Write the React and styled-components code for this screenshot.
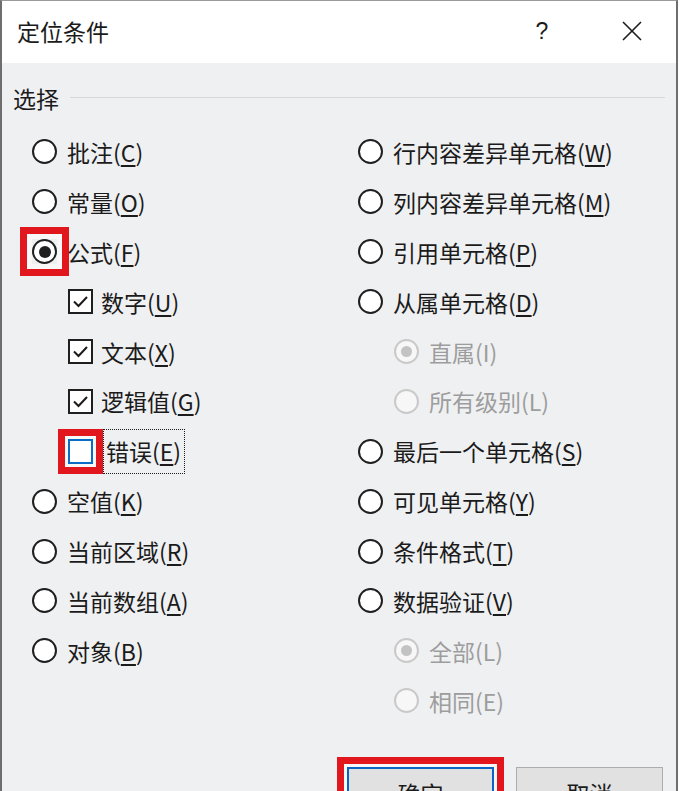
import React from "react";
import styled, { createGlobalStyle, css } from "styled-components";

const leftOptions = [
  { type: "radio", label: "批注", hotkey: "C" },
  { type: "radio", label: "常量", hotkey: "O" },
  { type: "radio", label: "公式", hotkey: "F", checked: true, highlight: true },
  { type: "check", label: "数字", hotkey: "U", checked: true, sub: true },
  { type: "check", label: "文本", hotkey: "X", checked: true, sub: true },
  { type: "check", label: "逻辑值", hotkey: "G", checked: true, sub: true },
  { type: "check", label: "错误", hotkey: "E", sub: true, highlight: true, focus: true },
  { type: "radio", label: "空值", hotkey: "K" },
  { type: "radio", label: "当前区域", hotkey: "R" },
  { type: "radio", label: "当前数组", hotkey: "A" },
  { type: "radio", label: "对象", hotkey: "B" },
];

const rightOptions = [
  { type: "radio", label: "行内容差异单元格", hotkey: "W" },
  { type: "radio", label: "列内容差异单元格", hotkey: "M" },
  { type: "radio", label: "引用单元格", hotkey: "P" },
  { type: "radio", label: "从属单元格", hotkey: "D" },
  { type: "radio", label: "直属", hotkey: "I", sub: true, disabled: true, checked: true },
  { type: "radio", label: "所有级别", hotkey: "L", sub: true, disabled: true },
  { type: "radio", label: "最后一个单元格", hotkey: "S" },
  { type: "radio", label: "可见单元格", hotkey: "Y" },
  { type: "radio", label: "条件格式", hotkey: "T" },
  { type: "radio", label: "数据验证", hotkey: "V" },
  { type: "radio", label: "全部", hotkey: "L", sub: true, disabled: true, checked: true },
  { type: "radio", label: "相同", hotkey: "E", sub: true, disabled: true },
];

function Option({ item }) {
  const { type, label, hotkey, checked, sub, disabled, highlight, focus } = item;
  return (
    <Row $sub={sub} $disabled={disabled}>
      {type === "radio" ? (
        <RadioFrame $highlight={highlight}>
          <Radio $disabled={disabled}>{checked && <Dot $disabled={disabled} />}</Radio>
        </RadioFrame>
      ) : (
        <CheckBox $highlight={highlight} $focus={focus}>
          {checked && (
            <svg width="21" height="21" viewBox="0 0 21 21">
              <path d="M4 10.5 L8.5 15 L17 6" fill="none" stroke="#1b1b1b" strokeWidth="2" />
            </svg>
          )}
        </CheckBox>
      )}
      <Label $focus={focus}>
        {label}(
        {disabled ? hotkey : <u>{hotkey}</u>})
      </Label>
    </Row>
  );
}

export default function App() {
  return (
    <>
      <GlobalStyle />
      <Window>
        <TitleBar>
          <Title>定位条件</Title>
          <HelpButton>?</HelpButton>
          <CloseButton>
            <svg width="20" height="20" viewBox="0 0 20 20">
              <path d="M1 1 L19 19 M19 1 L1 19" stroke="#1b1b1b" strokeWidth="1.6" />
            </svg>
          </CloseButton>
        </TitleBar>
        <Body>
          <GroupHeader>
            <span>选择</span>
            <Rule />
          </GroupHeader>
          <Columns>
            <Column>
              {leftOptions.map((item) => (
                <Option key={item.label} item={item} />
              ))}
            </Column>
            <Column>
              {rightOptions.map((item) => (
                <Option key={item.label} item={item} />
              ))}
            </Column>
          </Columns>
          <Buttons>
            <Button $primary>确定</Button>
            <Button>取消</Button>
          </Buttons>
        </Body>
      </Window>
    </>
  );
}

const GlobalStyle = createGlobalStyle`
  html, body {
    margin: 0;
    padding: 0;
    overflow: hidden;
    background: #ffffff;
  }
  body {
    font-family: "Noto Sans CJK SC", "Noto Sans", sans-serif;
    color: #1b1b1b;
  }
`;

const redFrame = (gap) => css`
  box-shadow: 0 0 0 ${gap}px #f8f8f8, 0 0 0 ${gap + 7}px #e2161d;
`;

const Window = styled.div`
  width: 678px;
  height: 900px;
  box-sizing: border-box;
  border-left: 2px solid #6e6e6e;
  border-right: 2px solid #6e6e6e;
  border-top: 1px solid #9a9a9a;
  display: flex;
  flex-direction: column;
  background: #eff0f2;
`;

const TitleBar = styled.div`
  height: 62px;
  flex-shrink: 0;
  display: flex;
  align-items: center;
  background: #ffffff;
  padding: 0 21px 0 15px;
`;

const Title = styled.div`
  flex: 1;
  font-size: 23px;
  line-height: 30px;
  padding-bottom: 2px;
`;

const HelpButton = styled.div`
  width: 46px;
  text-align: center;
  font-size: 23px;
  line-height: 30px;
  margin-right: 44px;
  font-family: "Liberation Sans", "Noto Sans", sans-serif;
  padding-bottom: 2px;
`;

const CloseButton = styled.div`
  width: 46px;
  height: 30px;
  display: flex;
  align-items: center;
  justify-content: center;
  padding-bottom: 2px;
`;

const Body = styled.div`
  flex: 1;
  padding: 20px 11px 0 11px;
  display: flex;
  flex-direction: column;
`;

const GroupHeader = styled.div`
  display: flex;
  align-items: center;
  gap: 11px;
  font-size: 23px;
  line-height: 30px;
`;

const Rule = styled.div`
  flex: 1;
  height: 1px;
  background: #d6d7d9;
  margin-top: -2px;
`;

const Columns = styled.div`
  display: grid;
  grid-template-columns: 326px 1fr;
  margin-top: 14px;
  padding-left: 19px;
`;

const Column = styled.div`
  display: flex;
  flex-direction: column;
`;

const Row = styled.div`
  height: 49.9px;
  display: flex;
  align-items: center;
  gap: 10px;
  padding-left: ${(p) => (p.$sub ? "36px" : "0")};
  font-size: 23px;
  color: ${(p) => (p.$disabled ? "#9d9d9d" : "#1b1b1b")};

  u {
    text-underline-offset: 3px;
    text-decoration-thickness: 1.5px;
  }
`;

const RadioFrame = styled.span`
  width: 25px;
  height: 25px;
  flex-shrink: 0;
  display: flex;
  ${(p) => p.$highlight && redFrame(5)}
`;

const Radio = styled.span`
  width: 25px;
  height: 25px;
  box-sizing: border-box;
  border-radius: 50%;
  border: 2px solid ${(p) => (p.$disabled ? "#c9c9c9" : "#1f1f1f")};
  background: ${(p) => (p.$disabled ? "#f7f7f7" : "#ffffff")};
  display: flex;
  align-items: center;
  justify-content: center;
`;

const Dot = styled.span`
  width: ${(p) => (p.$disabled ? "11px" : "12px")};
  height: ${(p) => (p.$disabled ? "11px" : "12px")};
  border-radius: 50%;
  background: ${(p) => (p.$disabled ? "#c3c3c3" : "#1f1f1f")};
`;

const CheckBox = styled.span`
  width: 25px;
  height: 25px;
  flex-shrink: 0;
  box-sizing: border-box;
  border: 2px solid ${(p) => (p.$focus ? "#0a6cc6" : "#1f1f1f")};
  background: #ffffff;
  display: flex;
  align-items: center;
  justify-content: center;
  margin-right: -2px;
  ${(p) => p.$highlight && redFrame(3)}
`;

const Label = styled.span`
  line-height: 30px;
  white-space: nowrap;
  ${(p) =>
    p.$focus &&
    css`
      border: 1px dotted #1b1b1b;
      padding: 6px 3px 7px 2px;
      margin-left: 2px;
    `}
`;

const Buttons = styled.div`
  display: flex;
  justify-content: flex-end;
  gap: 22px;
  margin-top: 41px;
  padding-right: 2px;
`;

const Button = styled.div`
  width: 147px;
  height: 52px;
  box-sizing: border-box;
  display: flex;
  align-items: center;
  justify-content: center;
  font-size: 23px;
  background: #e1e1e1;
  border: ${(p) => (p.$primary ? "2px solid #0a64c4" : "1px solid #adadad")};
  ${(p) => p.$primary && redFrame(3)}
`;
